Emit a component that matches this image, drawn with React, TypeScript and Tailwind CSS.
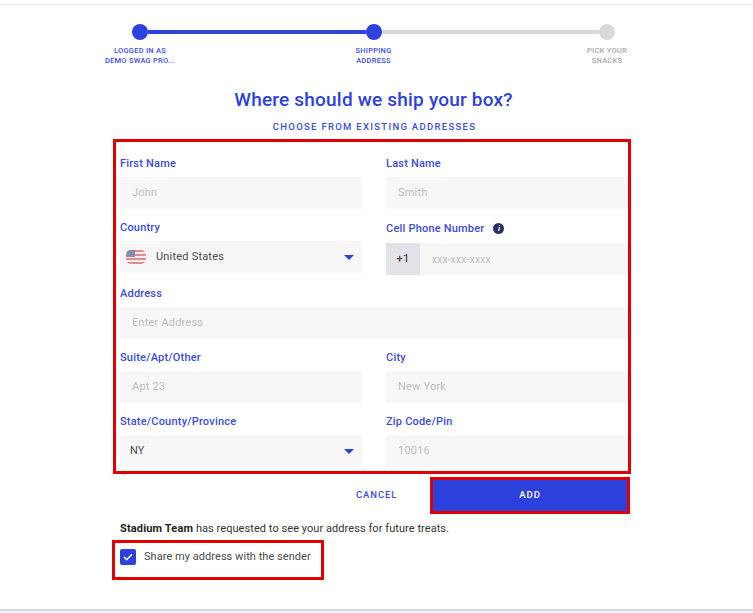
const font = { fontFamily: '"Roboto", "Liberation Sans", sans-serif' }

function Caret() {
  return (
    <svg width="10" height="5" viewBox="0 0 10 5" className="shrink-0">
      <path d="M0 0h10L5 5z" fill="#2d41dc" />
    </svg>
  )
}

function Flag() {
  return (
    <svg width="20" height="14" viewBox="0 0 20 14" className="shrink-0 opacity-60">
      <defs>
        <clipPath id="flag-clip">
          <rect width="20" height="14" rx="5" />
        </clipPath>
      </defs>
      <g clipPath="url(#flag-clip)">
        <rect width="20" height="14" fill="#f3e3e3" />
        <rect y="0" width="20" height="2" fill="#c9484f" />
        <rect y="4" width="20" height="2" fill="#c9484f" />
        <rect y="8" width="20" height="2" fill="#c9484f" />
        <rect y="12" width="20" height="2" fill="#c9484f" />
        <rect width="9" height="7" fill="#3f4a86" />
      </g>
    </svg>
  )
}

function Label({ children }: { children: React.ReactNode }) {
  return <div className="h-[14px] text-[11px] leading-[14px] font-medium text-[#3b4ddc] tracking-[0.2px]">{children}</div>
}

function Input({ label, placeholder }: { label: string; placeholder: string }) {
  return (
    <div className="flex flex-col gap-[6px]">
      <Label>{label}</Label>
      <div className="h-8 bg-[#f7f7f7] flex items-center pl-3 text-[11px] text-[#bdbdbd] tracking-[0.2px]">{placeholder}</div>
    </div>
  )
}

function Step({ lines, off }: { lines: string[]; off?: boolean }) {
  return (
    <div className={`w-[100px] text-center text-[7.5px] leading-[10px] font-medium tracking-[0.25px] ${off ? 'text-[#a9a9a9]' : 'text-[#3b4ddc]'}`}>
      {lines.map((l) => (
        <div key={l}>{l}</div>
      ))}
    </div>
  )
}

export default function App() {
  return (
    <div className="w-[753px] h-[613px] bg-white overflow-hidden flex flex-col" style={font}>
      <div className="h-[5px] border-b border-[#e3e5ea] shrink-0" />

      {/* Stepper */}
      <div className="mt-[19px] ml-[132px] w-[483px] flex items-center">
        <div className="w-4 h-4 rounded-full bg-[#2d41dc] shrink-0" />
        <div className="flex-1 h-1 bg-[#2d41dc]" />
        <div className="w-4 h-4 rounded-full bg-[#2d41dc] shrink-0" />
        <div className="flex-1 h-1 bg-[#d9d9d9]" />
        <div className="w-4 h-4 rounded-full bg-[#d9d9d9] shrink-0" />
      </div>
      <div className="mt-[6px] ml-[90px] w-[567px] flex justify-between">
        <Step lines={['LOGGED IN AS', 'DEMO SWAG PRO...']} />
        <Step lines={['SHIPPING', 'ADDRESS']} />
        <Step lines={['PICK YOUR', 'SNACKS']} off />
      </div>

      <h1 className="mt-[22px] ml-[90px] w-[567px] text-center text-[19px] leading-[24px] font-medium tracking-[0.2px] text-[#2d41dc]">
        Where should we ship your box?
      </h1>
      <div className="mt-[9px] ml-[91px] w-[567px] text-center text-[9.5px] leading-[12px] font-medium tracking-[1.3px] text-[#3b4ddc]">
        CHOOSE FROM EXISTING ADDRESSES
      </div>

      {/* Address form */}
      <div className="mt-[6px] ml-[113px] w-[518px] h-[335px] border-[3px] border-[#e00000] pl-[4px] pt-[15px] grid grid-cols-[242px_242px] gap-x-[24px] gap-y-[12px] content-start">
        <Input label="First Name" placeholder="John" />
        <Input label="Last Name" placeholder="Smith" />

        <div className="flex flex-col gap-[6px]">
          <Label>Country</Label>
          <div className="h-8 bg-[#f7f7f7] flex items-center pl-[6px] pr-[8px] text-[11px] text-[#4a4a4a] tracking-[0.2px]">
            <Flag />
            <span className="ml-[10px] flex-1">United States</span>
            <Caret />
          </div>
        </div>
        <div className="flex flex-col gap-[6px]">
          <div className="flex items-center gap-[9px] h-[16px]">
            <Label>Cell Phone Number</Label>
            <span className="w-[11px] h-[11px] -mt-[2px] rounded-full bg-[#27306b] text-white text-[8px] leading-[11px] font-bold italic text-center">i</span>
          </div>
          <div className="h-8 bg-[#f7f7f7] flex items-center text-[10px] text-[#bdbdbd] tracking-[0.3px]">
            <div className="w-[34px] h-8 bg-[#e2e3e8] text-[#4a4a4a] text-[11px] font-medium flex items-center justify-center">+1</div>
            <span className="ml-[12px]">xxx-xxx-xxxx</span>
          </div>
        </div>

        <div className="col-span-2">
          <Input label="Address" placeholder="Enter Address" />
        </div>

        <Input label="Suite/Apt/Other" placeholder="Apt 23" />
        <Input label="City" placeholder="New York" />

        <div className="flex flex-col gap-[6px]">
          <Label>State/County/Province</Label>
          <div className="h-8 bg-[#f7f7f7] flex items-center justify-between pl-[10px] pr-[8px] text-[11px] text-[#4a4a4a]">
            <span>NY</span>
            <Caret />
          </div>
        </div>
        <Input label="Zip Code/Pin" placeholder="10016" />
      </div>

      {/* Actions */}
      <div className="mt-[3px] ml-[356px] flex items-center">
        <span className="w-[74px] text-[9.5px] font-medium tracking-[0.9px] text-[#3b4ddc]">CANCEL</span>
        <button className="w-[200px] h-[37px] bg-[#2d41dc] border-[3px] border-[#e00000] text-white text-[9.5px] font-medium tracking-[1px]">ADD</button>
      </div>

      <p className="mt-[8px] ml-[120px] text-[11px] leading-[14px] text-[#333] tracking-[0.06px]">
        <span className="font-bold text-[#222] tracking-[0.15px]">Stadium Team</span> has requested to see your address for future treats.
      </p>

      <div className="mt-[4px] ml-[112px] w-[212px] h-[40px] border-[3px] border-[#e00000] pl-[5px] pt-[6px] flex items-start gap-2">
        <span className="w-4 h-4 rounded-[2px] bg-[#2d41dc] flex items-center justify-center shrink-0">
          <svg width="10" height="8" viewBox="0 0 10 8" fill="none">
            <path d="M1 4l2.7 2.7L9 1.2" stroke="#fff" strokeWidth="1.6" />
          </svg>
        </span>
        <span className="mt-[1px] text-[11px] leading-[14px] text-[#4a4a4a] tracking-[0.05px]">Share my address with the sender</span>
      </div>

      <div className="mt-auto h-[4px] border-t-2 border-[#d5d5dd] bg-[#f1f1f8] shrink-0" />
    </div>
  )
}
